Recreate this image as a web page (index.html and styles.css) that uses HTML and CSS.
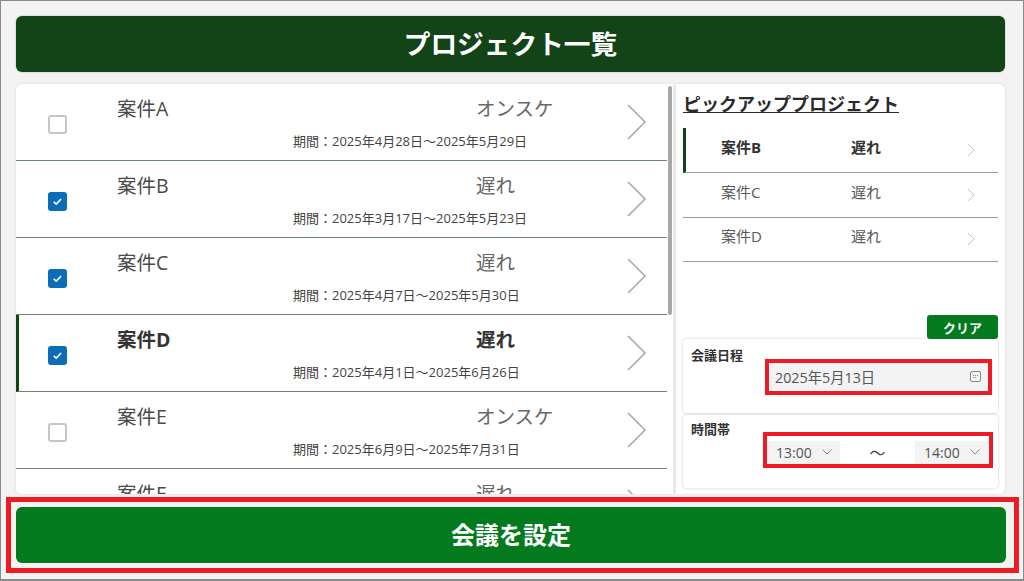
FILE: index.html
```html
<!DOCTYPE html>
<html lang="ja">
<head>
    <meta charset="UTF-8">
    <title>プロジェクト一覧</title>
    <link rel="stylesheet" href="styles.css">
</head>
<body>
    <div class="screen">
        <header class="title-bar">プロジェクト一覧</header>

        <div class="content">
            <!-- Project list -->
            <section class="list-panel">
                <div class="list-scroll">
                    <div class="row">
                        <span class="check"></span>
                        <div class="row-main">
                            <div class="row-top"><span class="row-name">案件A</span><span class="row-status">オンスケ</span></div>
                            <div class="row-period">期間：2025年4月28日～2025年5月29日</div>
                        </div>
                        <svg class="chevron" viewBox="0 0 20 36"><path d="M1 1l17 17L1 35"/></svg>
                    </div>
                    <div class="row">
                        <span class="check on"><svg viewBox="0 0 14 14"><path d="M3.5 7.3l2.3 2.2 4.500-4.700"/></svg></span>
                        <div class="row-main">
                            <div class="row-top"><span class="row-name">案件B</span><span class="row-status">遅れ</span></div>
                            <div class="row-period">期間：2025年3月17日～2025年5月23日</div>
                        </div>
                        <svg class="chevron" viewBox="0 0 20 36"><path d="M1 1l17 17L1 35"/></svg>
                    </div>
                    <div class="row">
                        <span class="check on"><svg viewBox="0 0 14 14"><path d="M3.5 7.3l2.3 2.2 4.500-4.700"/></svg></span>
                        <div class="row-main">
                            <div class="row-top"><span class="row-name">案件C</span><span class="row-status">遅れ</span></div>
                            <div class="row-period">期間：2025年4月7日～2025年5月30日</div>
                        </div>
                        <svg class="chevron" viewBox="0 0 20 36"><path d="M1 1l17 17L1 35"/></svg>
                    </div>
                    <div class="row selected">
                        <span class="check on"><svg viewBox="0 0 14 14"><path d="M3.5 7.3l2.3 2.2 4.500-4.700"/></svg></span>
                        <div class="row-main">
                            <div class="row-top"><span class="row-name">案件D</span><span class="row-status">遅れ</span></div>
                            <div class="row-period">期間：2025年4月1日～2025年6月26日</div>
                        </div>
                        <svg class="chevron" viewBox="0 0 20 36"><path d="M1 1l17 17L1 35"/></svg>
                    </div>
                    <div class="row">
                        <span class="check"></span>
                        <div class="row-main">
                            <div class="row-top"><span class="row-name">案件E</span><span class="row-status">オンスケ</span></div>
                            <div class="row-period">期間：2025年6月9日～2025年7月31日</div>
                        </div>
                        <svg class="chevron" viewBox="0 0 20 36"><path d="M1 1l17 17L1 35"/></svg>
                    </div>
                    <div class="row last">
                        <span class="check"></span>
                        <div class="row-main">
                            <div class="row-top"><span class="row-name">案件F</span><span class="row-status">遅れ</span></div>
                        </div>
                        <svg class="chevron" viewBox="0 0 20 36"><path d="M1 1l17 17L1 35"/></svg>
                    </div>
                </div>
                <div class="scroll-thumb"></div>
            </section>

            <!-- Pickup and meeting form -->
            <aside class="side-panel">
                <h2 class="pickup-title">ピックアッププロジェクト</h2>
                <div class="pickup-list">
                    <div class="pickup-row selected"><span class="pickup-name">案件B</span><span class="pickup-status">遅れ</span><svg class="mini-chevron" viewBox="0 0 8 14"><path d="M1 1l6 6-6 6"/></svg></div>
                    <div class="pickup-row"><span class="pickup-name">案件C</span><span class="pickup-status">遅れ</span><svg class="mini-chevron" viewBox="0 0 8 14"><path d="M1 1l6 6-6 6"/></svg></div>
                    <div class="pickup-row"><span class="pickup-name">案件D</span><span class="pickup-status">遅れ</span><svg class="mini-chevron" viewBox="0 0 8 14"><path d="M1 1l6 6-6 6"/></svg></div>
                </div>

                <div class="clear-line"><button class="clear-btn">クリア</button></div>

                <div class="form-card date-card">
                    <div class="form-label">会議日程</div>
                    <div class="date-input">
                        <span>2025年5月13日</span>
                        <svg class="cal-icon" viewBox="0 0 11 11"><rect x="0.5" y="0.5" width="10" height="10" rx="1.5"/><path d="M3 4.5h1M5 4.5h1M7 4.5h1M3 6.5h1M5 6.5h1"/></svg>
                    </div>
                </div>
                <div class="form-card time-card">
                    <div class="form-label">時間帯</div>
                    <div class="time-inputs">
                        <div class="time-select"><span>13:00</span><svg class="down" viewBox="0 0 10 6"><path d="M.5.5L5 5 9.5.5"/></svg></div>
                        <span class="tilde">～</span>
                        <div class="time-select"><span>14:00</span><svg class="down" viewBox="0 0 10 6"><path d="M.5.5L5 5 9.5.5"/></svg></div>
                    </div>
                </div>
            </aside>
        </div>

        <button class="submit-btn">会議を設定</button>

        <!-- Red annotation frames -->
        <div class="mark mark-date"></div>
        <div class="mark mark-time"></div>
        <div class="mark mark-submit"></div>
    </div>
</body>
</html>
```

FILE: styles.css
```css
* {
    margin: 0;
    padding: 0;
    box-sizing: border-box;
    font-family: "Open Sans", "Noto Sans CJK JP", sans-serif;
}

body {
    background: #f3f3f3;
    overflow: hidden;
}

.screen {
    position: relative;
    width: 1024px;
    height: 581px;
    padding: 16px 18px 0 16px;
    border: 1px solid #8a8a8a;
    border-bottom-width: 2px;
}

.title-bar {
    height: 56px;
    margin: -1px 0 0 -1px;
    background: #134417;
    border-radius: 6px;
    box-shadow: 0 0 2px rgba(0, 0, 0, .25);
    color: #fff;
    font-size: 26.7px;
    font-weight: 700;
    line-height: 56px;
    text-align: center;
}

.content {
    display: flex;
    gap: 3px;
    margin: 12px 0 0 -1px;
    height: 410px;
}

/* Project list */
.list-panel {
    position: relative;
    width: 657px;
    background: #fff;
    border-radius: 6px 0 0 6px;
    box-shadow: 0 0 3px rgba(0, 0, 0, .12);
    overflow: hidden;
}

.list-scroll {
    width: 651px;
}

.row {
    display: flex;
    height: 77px;
    border-bottom: 1px solid #6f8a72;
    padding-left: 32px;
}

.row.selected {
    border-left: 3px solid #134417;
    padding-left: 29px;
}

.row.last {
    height: 25px;
    border-bottom: none;
    overflow: hidden;
}

.check {
    flex: none;
    width: 19px;
    height: 19px;
    margin-top: 31px;
    background: #fff;
    border: 2px solid #c6c6c6;
    border-radius: 3px;
}

.check.on {
    background: #0b6cb8;
    border-color: #0b6cb8;
}

.check svg {
    display: block;
    width: 15px;
    height: 15px;
}

.check svg path {
    fill: none;
    stroke: #fff;
    stroke-width: 1.5;
}

.row-main {
    width: 510px;
    margin-left: 50px;
}

.row-top {
    display: flex;
    padding-top: 11px;
    height: 48px;
    font-size: 19.5px;
    line-height: 28px;
    color: #4a4a4a;
}

.row-name {
    width: 359px;
}

.row-status {
    color: #686868;
}

.row-period {
    margin-left: 176px;
    font-size: 13px;
    line-height: 18px;
    color: #444;
}

.selected .row-name,
.selected .row-status {
    font-weight: 700;
    color: #333;
}

.chevron {
    flex: none;
    width: 20px;
    height: 36px;
    margin-top: 20px;
}

.chevron path {
    fill: none;
    stroke: #a6a6a6;
    stroke-width: 1.5;
}

.scroll-thumb {
    position: absolute;
    top: 2px;
    right: 1px;
    width: 4px;
    height: 229px;
    background: #a8a8a8;
    border-radius: 2px;
}

/* Right side */
.side-panel {
    flex: 1;
    background: #fff;
    border-radius: 0 6px 6px 0;
    box-shadow: 0 0 3px rgba(0, 0, 0, .12);
    padding: 6px 7px 0 7px;
}

.pickup-title {
    font-size: 18px;
    font-weight: 700;
    line-height: 28px;
    color: #2b2b2b;
    text-decoration: underline;
}

.pickup-list {
    margin-top: 10px;
}

.pickup-row {
    display: flex;
    align-items: center;
    height: 45px;
    padding: 0 0 7px 38px;
    border-bottom: 1px solid #8ea690;
    font-size: 15px;
    color: #5a5a5a;
}

.pickup-row + .pickup-row {
    height: 44.5px;
}

.pickup-row.selected {
    border-left: 3px solid #134417;
    padding-left: 35px;
    font-weight: 700;
    color: #333;
}

.pickup-name {
    width: 130px;
}

.pickup-status {
    width: 116px;
}

.mini-chevron {
    width: 8px;
    height: 14px;
    margin-top: 7px;
}

.mini-chevron path {
    fill: none;
    stroke: #c4c4c4;
    stroke-width: 1;
}

.clear-line {
    display: flex;
    justify-content: flex-end;
    margin-top: 53px;
}

.clear-btn {
    width: 71px;
    height: 24px;
    background: #047a1f;
    border: none;
    border-radius: 3px;
    color: #fff;
    font-size: 13px;
    font-weight: 700;
}

.form-card {
    background: #fff;
    border-radius: 4px;
    box-shadow: 0 0 3px rgba(0, 0, 0, .22);
    padding: 7px 8px;
}

.date-card {
    height: 74px;
}

.time-card {
    height: 73px;
    margin-top: 2px;
    padding-top: 5px;
}

.form-label {
    font-size: 13px;
    font-weight: 700;
    line-height: 18px;
    color: #333;
}

.date-input {
    display: flex;
    align-items: center;
    justify-content: space-between;
    width: 217px;
    height: 27px;
    margin: -1px 0 0 79px;
    padding: 0 6px 0 5px;
    background: #f3f3f3;
    font-size: 14.3px;
    color: #555;
}

.cal-icon {
    width: 11px;
    height: 11px;
}

.cal-icon rect,
.cal-icon path {
    fill: none;
    stroke: #888;
    stroke-width: 1;
}

.time-inputs {
    display: flex;
    align-items: center;
    justify-content: space-between;
    width: 221px;
    margin: 2px 0 0 76px;
}

.time-select {
    display: flex;
    align-items: center;
    justify-content: space-between;
    width: 73px;
    height: 23px;
    padding: 0 8px 0 9px;
    background: #f3f3f3;
    font-size: 14px;
    color: #555;
}

.down {
    width: 10px;
    height: 6px;
}

.down path {
    fill: none;
    stroke: #888;
    stroke-width: 1;
}

.tilde {
    font-size: 16px;
    color: #444;
}

.submit-btn {
    display: block;
    width: 990px;
    height: 56px;
    margin: 13px 0 0 -1px;
    padding-bottom: 3px;
    background: #047a1f;
    border: none;
    border-radius: 6px;
    color: #fff;
    font-size: 24px;
    font-weight: 700;
}

/* annotation frames */
.mark {
    position: absolute;
    border: 4px solid #ed1c24;
}

.mark-date {
    left: 764px;
    top: 358px;
    width: 227px;
    height: 36px;
}

.mark-time {
    left: 762px;
    top: 431px;
    width: 230px;
    height: 36px;
}

.mark-submit {
    left: 5px;
    top: 496px;
    width: 1013px;
    height: 76px;
    border-width: 5px;
}
```
